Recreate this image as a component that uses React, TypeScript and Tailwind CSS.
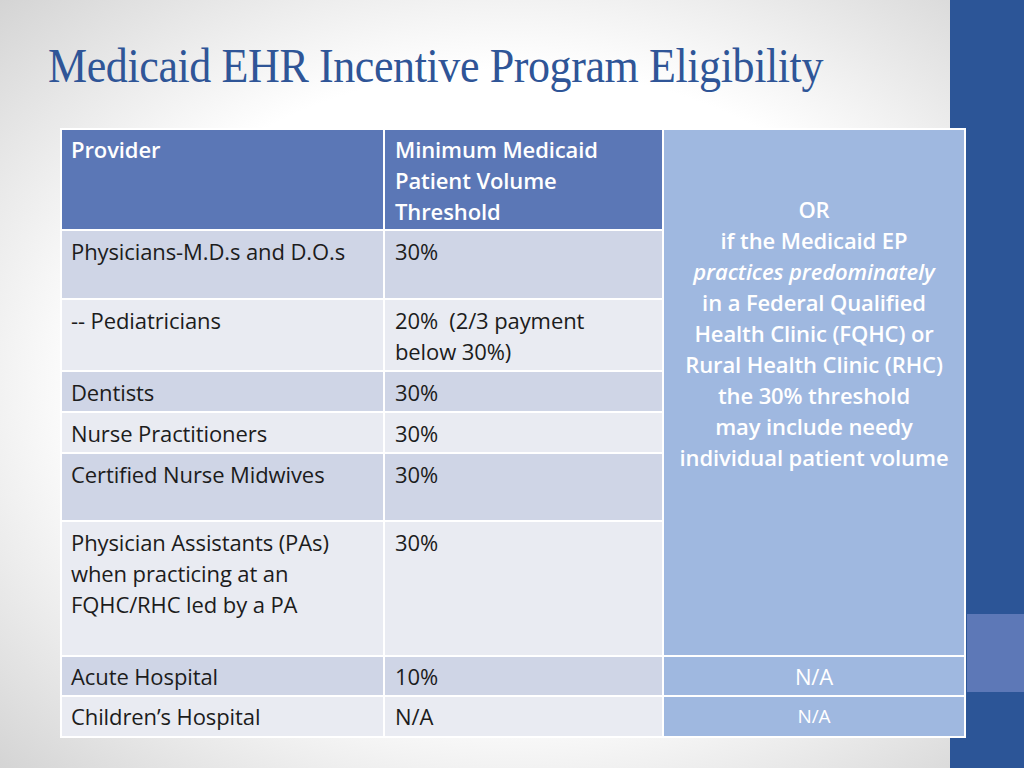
import React from "react";

type Row = {
  provider: React.ReactNode;
  volume: React.ReactNode;
  height: string;
  shade: "dark" | "light";
};

const rows: Row[] = [
  { provider: "Physicians-M.D.s and D.O.s", volume: "30%", height: "h-[69px]", shade: "dark" },
  {
    provider: "-- Pediatricians",
    volume: (
      <>
        20%&nbsp; (2/3 payment
        <br />
        below 30%)
      </>
    ),
    height: "h-[72px]",
    shade: "light",
  },
  { provider: "Dentists", volume: "30%", height: "h-[41px]", shade: "dark" },
  { provider: "Nurse Practitioners", volume: "30%", height: "h-[41px]", shade: "light" },
  { provider: "Certified Nurse Midwives", volume: "30%", height: "h-[68px]", shade: "dark" },
  {
    provider: (
      <>
        Physician Assistants (PAs)
        <br />
        when practicing at an
        <br />
        FQHC/RHC led by a PA
      </>
    ),
    volume: "30%",
    height: "h-[135px]",
    shade: "light",
  },
];

export default function App() {
  return (
    <div className="flex w-[1024px] h-[768px] overflow-hidden bg-[radial-gradient(ellipse_at_center,#ffffff_58%,#d4d4d4_100%)] font-['Open_Sans','Liberation_Sans',sans-serif]">
      {/* slide body */}
      <div className="flex-1 flex flex-col">
        <h1 className="pt-[40px] pl-[48px] text-[44px] leading-none text-[#2f5597] font-['Liberation_Serif',serif] tracking-[-0.4px] scale-y-[1.08] origin-top-left">
          Medicaid EHR Incentive Program Eligibility
        </h1>

        <table className="relative z-10 mt-[44px] ml-[60px] -mr-[16px] w-[904px] table-fixed border-collapse text-[22px] leading-[31px] tracking-[-0.1px]">
          <colgroup>
            <col className="w-[323px]" />
            <col className="w-[279px]" />
            <col className="w-[302px]" />
          </colgroup>
          <tbody>
            <tr className="h-[101px]">
              <th className="border-2 border-white bg-[#5b77b6] px-[9px] pt-[4px] align-top text-left font-semibold text-white">
                Provider
              </th>
              <th className="border-2 border-white bg-[#5b77b6] px-[10px] pt-[4px] align-top text-left font-semibold text-white">
                Minimum Medicaid
                <br />
                Patient Volume
                <br />
                Threshold
              </th>
              <td
                rowSpan={7}
                className="border-2 border-white bg-[#9fb8e0] pt-[64px] align-top text-center font-semibold text-white"
              >
                OR
                <br />
                if the Medicaid EP
                <br />
                <i>practices predominately</i>
                <br />
                in a Federal Qualified
                <br />
                Health Clinic (FQHC) or
                <br />
                Rural Health Clinic (RHC)
                <br />
                the 30% threshold
                <br />
                may include needy
                <br />
                individual patient volume
              </td>
            </tr>
            {rows.map((r, i) => (
              <tr key={i} className={r.height}>
                <td
                  className={`border-2 border-white px-[9px] pt-[5px] align-top text-[#1c1c1c] ${
                    r.shade === "dark" ? "bg-[#cfd5e6]" : "bg-[#e9ebf2]"
                  }`}
                >
                  {r.provider}
                </td>
                <td
                  className={`border-2 border-white px-[10px] pt-[5px] align-top text-[#1c1c1c] ${
                    r.shade === "dark" ? "bg-[#cfd5e6]" : "bg-[#e9ebf2]"
                  }`}
                >
                  {r.volume}
                </td>
              </tr>
            ))}
            <tr className="h-[40px]">
              <td className="border-2 border-white bg-[#cfd5e6] px-[9px] align-middle text-[#1c1c1c]">Acute Hospital</td>
              <td className="border-2 border-white bg-[#cfd5e6] px-[10px] align-middle text-[#1c1c1c]">10%</td>
              <td className="border-2 border-white bg-[#9fb8e0] align-middle text-center text-white">N/A</td>
            </tr>
            <tr className="h-[41px]">
              <td className="border-2 border-white bg-[#e9ebf2] px-[9px] align-middle text-[#1c1c1c]">Children’s Hospital</td>
              <td className="border-2 border-white bg-[#e9ebf2] px-[10px] align-middle text-[#1c1c1c]">N/A</td>
              <td className="border-2 border-white bg-[#9fb8e0] align-middle text-center text-[19px] text-white">N/A</td>
            </tr>
          </tbody>
        </table>
      </div>

      {/* right accent bar */}
      <aside className="w-[76px] shrink-0 flex flex-col bg-[#2c5597]">
        <div className="mt-[614px] ml-[17px] h-[78px] bg-[#5d78b7]" />
      </aside>
    </div>
  );
}
